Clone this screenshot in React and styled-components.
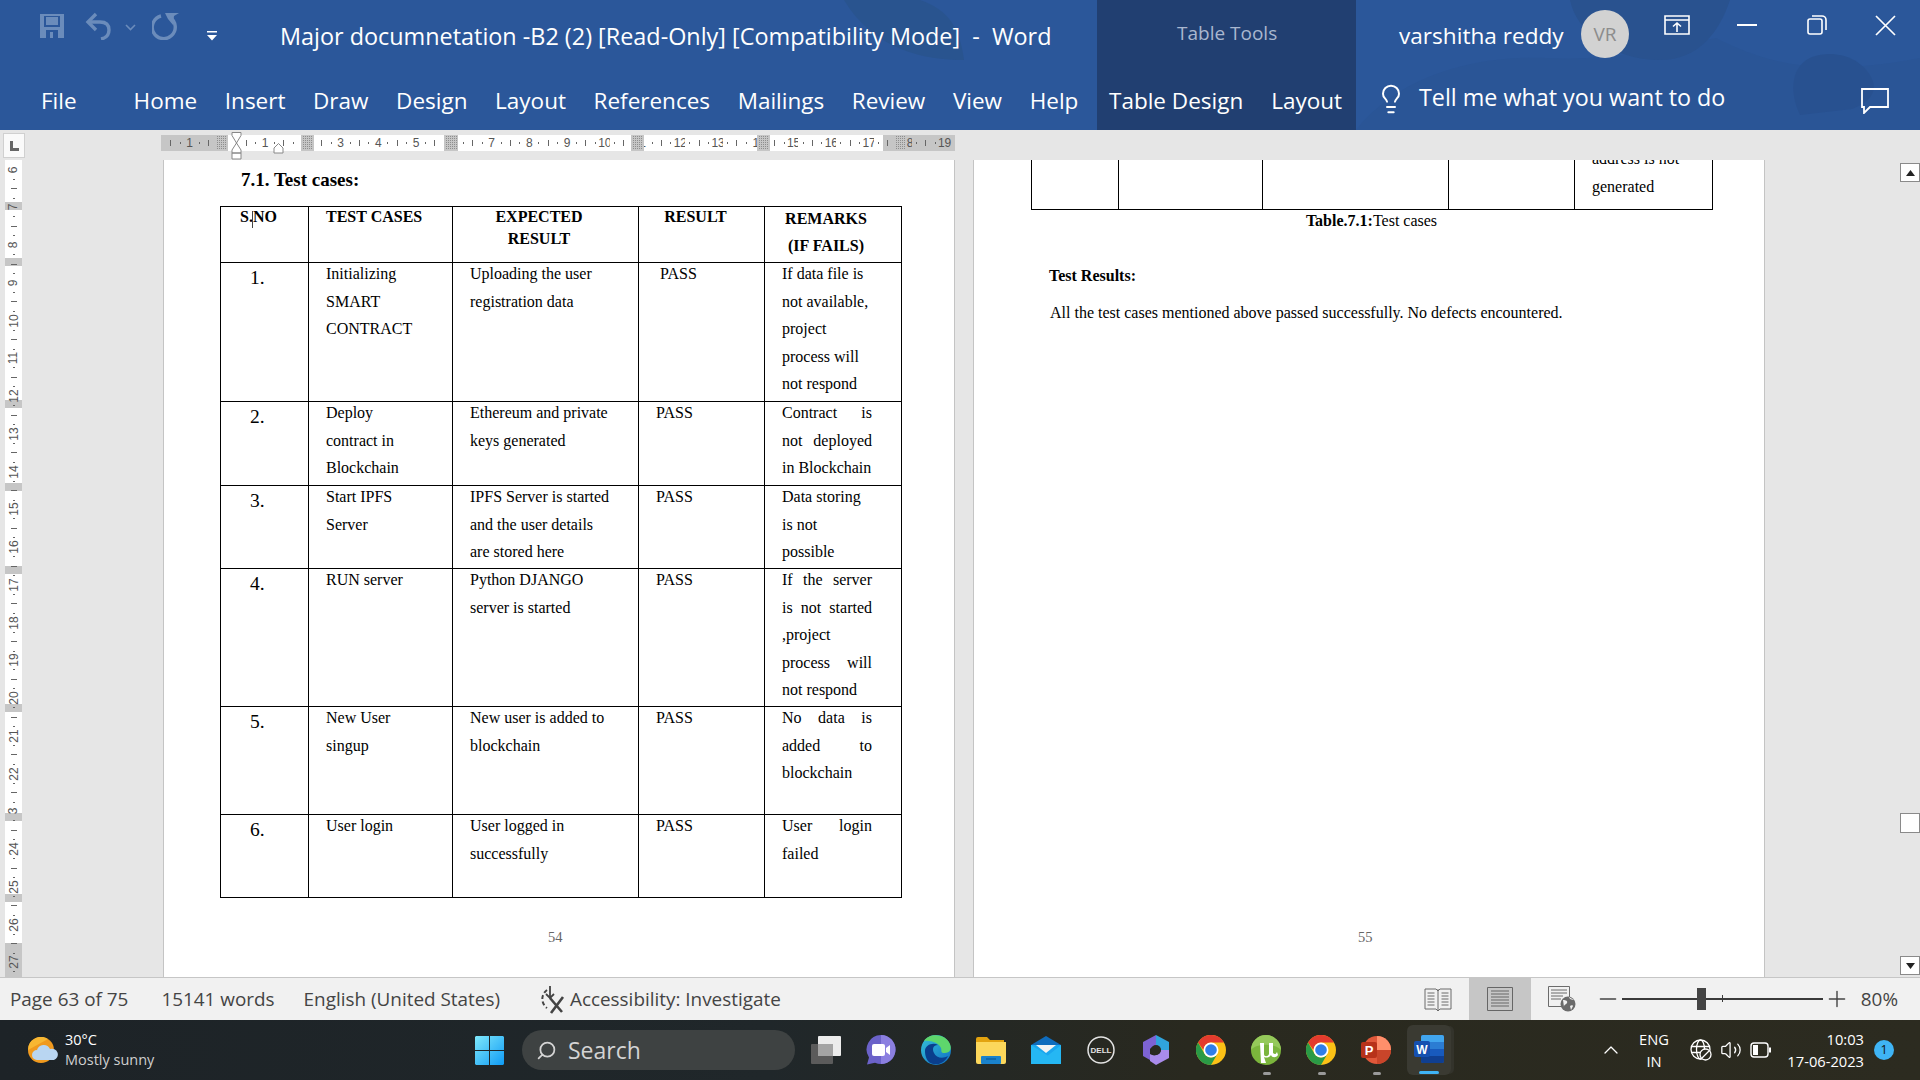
import React from 'react';
import styled, { createGlobalStyle } from 'styled-components';
import { Lightbulb, Search, Volume2, ChevronUp, Minus, Plus } from 'lucide-react';

const GlobalStyle = createGlobalStyle`
  html, body { margin: 0; padding: 0; }
  body { width: 1920px; height: 1080px; overflow: hidden; font-family: "Open Sans", sans-serif; }
  * { box-sizing: border-box; }
`;

const Screen = styled.div`
  width: 1920px;
  height: 1080px;
  display: flex;
  flex-direction: column;
  background: #e6e6e6;
`;

/* ---------- ribbon ---------- */

const Ribbon = styled.header`
  position: relative;
  height: 130px;
  display: flex;
  flex: none;
  background: #2b579a;
  color: #fff;
  overflow: hidden;
`;

const Art = styled.svg`
  position: absolute;
  left: 0;
  top: 0;
  pointer-events: none;
`;

const LeftPart = styled.div`
  position: relative;
  width: 1097px;
  display: flex;
  flex-direction: column;
`;

const ToolsPart = styled.div`
  position: relative;
  width: 259px;
  display: flex;
  flex-direction: column;
  background: rgba(28, 48, 88, 0.62);
`;

const RightPart = styled.div`
  position: relative;
  flex: 1;
  display: flex;
  flex-direction: column;
`;

const TitleRow = styled.div`
  height: 74px;
  display: flex;
  align-items: flex-start;
  padding: 12px 0 0 39px;
`;

const QuickIcon = styled.svg`
  flex: none;
  margin-right: ${(p) => p.$gap || 0}px;
  margin-top: ${(p) => p.$top || 0}px;
`;

const DocTitle = styled.div`
  font-size: 23.4px;
  line-height: 48px;
  white-space: pre;
  margin-left: 63px;
`;

const TabRow = styled.nav`
  height: 56px;
  display: flex;
  align-items: flex-start;
  padding-left: ${(p) => p.$left || 0}px;
`;

const Tab = styled.span`
  font-size: 22.5px;
  line-height: 54px;
  margin-right: ${(p) => p.$gap ?? 27.6}px;
  white-space: nowrap;
`;

const ToolsLabel = styled.div`
  height: 74px;
  padding: 15px 0 0 80px;
  font-size: 19px;
  line-height: 36px;
  color: #a9b7cf;
`;

const UserRow = styled.div`
  height: 74px;
  display: flex;
  align-items: flex-start;
  padding-left: 43px;
`;

const UserName = styled.div`
  width: 182px;
  font-size: 22.6px;
  line-height: 72px;
`;

const Avatar = styled.div`
  width: 48px;
  height: 48px;
  margin-top: 10px;
  border-radius: 50%;
  background: #d2d2d2;
  color: #8c8c8c;
  font-size: 19px;
  line-height: 48px;
  text-align: center;
`;

const WinButtons = styled.div`
  display: flex;
  align-items: center;
  height: 50px;
  margin-left: 35px;
`;

const WinIcon = styled.svg`
  flex: none;
  margin-left: ${(p) => p.$gap || 0}px;
`;

const TellRow = styled.div`
  display: flex;
  align-items: flex-start;
  height: 56px;
  padding-left: 19px;
`;

const TellText = styled.div`
  font-size: 23.3px;
  line-height: 46px;
  margin-left: 12px;
  width: 441px;
  white-space: nowrap;
`;

const BulbWrap = styled.div`
  margin-top: 9px;
  width: 32px;
  height: 32px;
`;

const CommentWrap = styled.div`
  margin-top: 14px;
`;

/* ---------- horizontal ruler ---------- */

const RulerBar = styled.div`
  height: 30px;
  flex: none;
  display: flex;
  background: #e6e6e6;
`;

const TabStopBox = styled.div`
  width: 22px;
  height: 25px;
  margin: 3px 0 0 3px;
  background: #fafafa;
  border: 1px solid #d0d0d0;
  display: flex;
  align-items: center;
  justify-content: center;
`;

const RulerTrack = styled.div`
  position: relative;
  display: flex;
  width: 794px;
  height: 16px;
  margin: 5px 0 0 136px;
  padding-left: 5px;
  background: #c6c6c6;
`;

const Cell = styled.div`
  flex: none;
  width: 9.45px;
  height: 16px;
  background: ${(p) => (p.$shade ? '#c6c6c6' : '#fff')};
  color: #555;
  display: flex;
  align-items: center;
  justify-content: center;
  font-family: "Liberation Sans", sans-serif;
  font-size: 12px;
  white-space: nowrap;
`;

const Dot = styled.i`
  display: block;
  width: 1px;
  height: ${(p) => (p.$long ? 6 : 2)}px;
  background: #666;
`;

const MarginMark = styled.div`
  position: absolute;
  top: 0;
  height: 16px;
  background: #c6c6c6;
  padding: 1px;
`;

const Hatch = styled.div`
  width: 100%;
  height: 100%;
  background-color: #8e8e8e;
  background-image: repeating-linear-gradient(0deg, #c6c6c6 0 1px, transparent 1px 2px),
    repeating-linear-gradient(90deg, #c6c6c6 0 1px, transparent 1px 2px);
`;

const IndentMark = styled.svg`
  position: absolute;
  top: ${(p) => p.$top}px;
`;

/* ---------- document ---------- */

const DocArea = styled.div`
  flex: 1;
  min-height: 0;
  display: flex;
`;

const SideRuler = styled.div`
  position: relative;
  width: 17px;
  margin-left: 5px;
  padding-top: 5px;
  background: #fff;
  flex: none;
  overflow: hidden;
`;

const SideCell = styled.div`
  position: relative;
  z-index: 1;
  height: 9.45px;
  display: flex;
  align-items: center;
  justify-content: center;
  color: #555;
  font-family: "Liberation Sans", sans-serif;
  font-size: 12px;
  white-space: nowrap;
`;

const SideNum = styled.span`
  display: block;
  line-height: 12px;
  transform: rotate(-90deg);
`;

const SideDot = styled.i`
  display: block;
  height: 1px;
  width: ${(p) => (p.$long ? 6 : 2)}px;
  background: #666;
`;

const SideMark = styled.div`
  position: absolute;
  left: 0;
  width: 17px;
  background: #c6c6c6;
`;

const Pages = styled.div`
  display: flex;
  gap: 18px;
  margin-left: 141px;
`;

const Page = styled.section`
  position: relative;
  width: 792px;
  height: 817px;
  background: #fff;
  border-left: 1px solid #c4c4c4;
  border-right: 1px solid #c4c4c4;
  overflow: hidden;
  color: #000;
  font-family: "Liberation Serif", serif;
  font-size: 16px;
`;

const SectionHead = styled.h2`
  margin: 7px 0 0 77px;
  font-size: 19px;
  line-height: 26px;
  font-weight: 700;
`;

const Sheet = styled.table`
  table-layout: fixed;
  border-collapse: collapse;
  width: ${(p) => p.$width}px;
  margin: ${(p) => p.$margin};
  tbody td, thead th { border: 1px solid #000; }
  ${(p) => p.$open && 'tbody tr:first-child td { border-top: none; }'}
`;

const Row = styled.tr`
  height: ${(p) => p.$h}px;
`;

const Td = styled.td`
  position: relative;
  padding: 0 ${(p) => p.$right ?? 0}px 0 ${(p) => p.$left ?? 17}px;
  vertical-align: top;
  font-size: 16px;
  line-height: 27.5px;
`;

const Th = styled.th`
  position: relative;
  padding: 0 ${(p) => p.$right ?? 0}px 0 ${(p) => p.$left ?? 0}px;
  vertical-align: top;
  font-size: 16px;
  font-weight: 700;
  line-height: ${(p) => p.$line || 27}px;
  text-align: ${(p) => p.$align || 'center'};
`;

const Lines = styled.div`
  margin-top: ${(p) => p.$shift ?? -3}px;
`;

const Line = styled.div`
  white-space: nowrap;
  ${(p) => p.$justify && 'white-space: normal; text-align: justify; text-align-last: justify;'}
`;

const Num = styled.div`
  font-size: 19.5px;
  line-height: 29px;
`;

const Caret = styled.span`
  position: absolute;
  left: 31px;
  top: 4px;
  width: 1px;
  height: 17px;
  background: #444;
`;

const PageNo = styled.div`
  position: absolute;
  bottom: 31px;
  left: ${(p) => p.$left}px;
  font-size: 14.5px;
  color: #666;
`;

const Caption = styled.div`
  width: 681px;
  margin-left: 57px;
  text-align: center;
  font-size: 16px;
  line-height: 22px;
  b { font-weight: 700; }
`;

const Para = styled.p`
  margin: ${(p) => p.$top}px 0 0 ${(p) => p.$left || 75}px;
  font-size: 16px;
  line-height: 24px;
  font-weight: ${(p) => (p.$bold ? 700 : 400)};
  white-space: nowrap;
`;

/* ---------- scrollbar ---------- */

const ScrollBar = styled.div`
  width: 20px;
  margin-left: auto;
  display: flex;
  flex-direction: column;
  align-items: stretch;
  padding: 3px 0 2px;
  height: 817px;
`;

const ScrollButton = styled.div`
  height: 19px;
  background: #fff;
  border: 1px solid #8a8a8a;
  color: #222;
  display: flex;
  align-items: center;
  justify-content: center;
`;

const ScrollThumb = styled.div`
  height: 20px;
  margin-top: 631px;
  margin-bottom: auto;
  background: #fff;
  border: 1px solid #8a8a8a;
`;

/* ---------- status bar ---------- */

const StatusBar = styled.footer`
  height: 43px;
  flex: none;
  display: flex;
  align-items: center;
  background: #f1f1f1;
  border-top: 1px solid #c6c6c6;
  color: #444;
  font-size: 18.9px;
  padding: 0 22px 0 10px;
`;

const StatusText = styled.span`
  margin-right: ${(p) => p.$gap}px;
  margin-left: ${(p) => p.$lead || 0}px;
  white-space: nowrap;
`;

const ViewSpacer = styled.div`
  flex: 1;
`;

const ViewButton = styled.div`
  width: ${(p) => p.$w}px;
  height: 42px;
  display: flex;
  align-items: center;
  justify-content: center;
  background: ${(p) => (p.$active ? '#c6c6c6' : 'transparent')};
`;

const Zoomer = styled.div`
  display: flex;
  align-items: center;
  margin-left: 2px;
  color: #444;
`;

const SliderLine = styled.div`
  position: relative;
  width: 201px;
  height: 2px;
  margin: 0 1px;
  background: #3a3a3a;
`;

const SliderThumb = styled.div`
  position: absolute;
  left: 75px;
  top: -10px;
  width: 9px;
  height: 22px;
  background: #444;
`;

const SliderTick = styled.div`
  position: absolute;
  left: 100px;
  top: -3px;
  width: 1px;
  height: 7px;
  background: #3a3a3a;
`;

const Percent = styled.div`
  margin-left: 11px;
  white-space: nowrap;
`;

/* ---------- taskbar ---------- */

const Taskbar = styled.div`
  height: 60px;
  flex: none;
  display: flex;
  align-items: center;
  background: linear-gradient(90deg, #1d2327 0%, #20272a 40%, #29291f 62%, #2c2b20 100%);
  color: #fff;
`;

const Weather = styled.div`
  width: 475px;
  display: flex;
  align-items: center;
  padding-left: 28px;
`;

const WeatherText = styled.div`
  margin-left: 7px;
  font-size: 14.5px;
  line-height: 20px;
  span { display: block; color: #cfcfcf; }
`;

const SearchPill = styled.div`
  width: 273px;
  height: 40px;
  margin: 0 3.5px 0 18px;
  border-radius: 20px;
  background: #3e4242;
  display: flex;
  align-items: center;
  padding-left: 14px;
  color: #d4d4d4;
  font-size: 23px;
  gap: 11px;
`;

const Slot = styled.div`
  position: relative;
  width: 55px;
  height: 60px;
  flex: none;
  display: flex;
  align-items: center;
  justify-content: center;
`;

const RunDot = styled.span`
  position: absolute;
  left: 24px;
  bottom: 5px;
  width: 8px;
  height: 3px;
  border-radius: 2px;
  background: #9a9a9a;
`;

const WordSlot = styled.div`
  position: relative;
  width: 44px;
  height: 50px;
  margin-left: 3px;
  flex: none;
  display: flex;
  align-items: center;
  justify-content: center;
  padding-bottom: 2px;
  border-radius: 6px;
  background: #3a3a32;
  box-shadow: 4px 0 0 -1px #33332b;
`;

const WordLine = styled.span`
  position: absolute;
  left: 12px;
  bottom: 1px;
  width: 20px;
  height: 3px;
  border-radius: 2px;
  background: #3fb4f5;
`;

const Tray = styled.div`
  margin-left: 148.5px;
  display: flex;
  align-items: center;
`;

const LangBlock = styled.div`
  width: 40px;
  margin: 0 16px 0 11px;
  text-align: center;
  font-size: 14.7px;
  line-height: 22px;
`;

const TrayIcons = styled.div`
  display: flex;
  align-items: center;
  gap: 8px;
`;

const Clock = styled.div`
  width: 93px;
  text-align: right;
  font-size: 14.7px;
  line-height: 22px;
`;

const Badge = styled.div`
  width: 20px;
  height: 20px;
  margin-left: 10px;
  border-radius: 50%;
  background: #3fb4f5;
  color: #111;
  font-size: 12.5px;
  line-height: 20px;
  text-align: center;
`;

/* ---------- data ---------- */

const rows = [
  { no: '1.', h: 139, cases: ['Initializing', 'SMART', 'CONTRACT'], expected: ['Uploading the user', 'registration data'], pass: 21,
    remarks: [['If data file is'], ['not available,'], ['project'], ['process will'], ['not respond']] },
  { no: '2.', h: 84, cases: ['Deploy', 'contract in', 'Blockchain'], expected: ['Ethereum and private', 'keys generated'], pass: 17,
    remarks: [['Contract is', 1], ['not deployed', 1], ['in Blockchain']] },
  { no: '3.', h: 83, cases: ['Start IPFS', 'Server'], expected: ['IPFS Server is started', 'and the user details', 'are stored here'], pass: 17,
    remarks: [['Data storing'], ['is not'], ['possible']] },
  { no: '4.', h: 138, cases: ['RUN server'], expected: ['Python DJANGO', 'server is started'], pass: 17,
    remarks: [['If the server', 1], ['is not started', 1], [',project'], ['process will', 1], ['not respond']] },
  { no: '5.', h: 108, cases: ['New User', 'singup'], expected: ['New user is added to', 'blockchain'], pass: 17,
    remarks: [['No data is', 1], ['added to', 1], ['blockchain']] },
  { no: '6.', h: 83, cases: ['User login'], expected: ['User logged in', 'successfully'], pass: 17,
    remarks: [['User login', 1], ['failed']] },
];

const rulerLabels = { 1: '1', 3: '3', 4: '4', 5: '5', 7: '7', 8: '8', 9: '9', 10: '10', 11: '1', 12: '12', 13: '13', 14: '1', 15: '15', 16: '16', 17: '17', 18: '18', 19: '19' };
const rulerMarks = [[54, 13], [140, 13], [283, 14], [470, 13], [596, 13], [733, 13]];
const sideMarks = [[42, 8], [98, 8], [240, 8], [323, 8], [406, 8], [544, 8], [653, 8], [734, 8], [783, 34]];
const tabs = ['Home', 'Insert', 'Draw', 'Design', 'Layout', 'References', 'Mailings', 'Review', 'View', 'Help'];
const cellIndexes = Array.from({ length: 83 }, (_, i) => i - 6);
const sideIndexes = Array.from({ length: 86 }, (_, i) => i);
const sideLabel = (n) => (n === 23 ? '3' : n);

/* ---------- small drawings ---------- */

const muted = '#6b8cbb';

const SaveIcon = () => (
  <QuickIcon width="26" height="26" viewBox="0 0 26 26" $gap={20} $top={1}>
    <path d="M1 1h24v24H1z" fill={muted} />
    <path d="M5 3h16v11H5z" fill="#2b579a" />
    <path d="M7 4h12v8H7z" fill={muted} />
    <path d="M7 17h12v8H7z" fill="#2b579a" />
    <path d="M11 19h3v6h-3z" fill={muted} />
  </QuickIcon>
);

const UndoIcon = () => (
  <QuickIcon width="27" height="28" viewBox="0 0 27 28" fill="none" stroke={muted} strokeWidth="3.4" $gap={13}>
    <path d="M11 2 3 10l8 8" />
    <path d="M3 10h12c6 0 9 3 9 8s-3 8-8 9" />
  </QuickIcon>
);

const ChevronSmall = () => (
  <QuickIcon width="11" height="7" viewBox="0 0 11 7" fill="none" stroke={muted} strokeWidth="1.6" $gap={16} $top={12}>
    <path d="m1 1 4.500 4.500L10 1" />
  </QuickIcon>
);

const RedoIcon = () => (
  <QuickIcon width="28" height="28" viewBox="0 0 28 28" fill="none" $gap={27}>
    <path d="M18 5.500A11.500 11.500 0 1 1 9 4" stroke={muted} strokeWidth="3.4" />
    <path d="M13 1h14l-5 3-1 9-5-6z" fill={muted} />
  </QuickIcon>
);

const CustomizeIcon = () => (
  <QuickIcon width="10" height="10" viewBox="0 0 10 10" $top={19}>
    <path d="M0 0h10v1.500H0zM0 4h10L5 9.500z" fill="#fff" />
  </QuickIcon>
);

const RibbonDisplay = () => (
  <WinIcon width="26" height="20" viewBox="0 0 26 20" fill="none" stroke="#fff" strokeWidth="1.6">
    <path d="M1 1h24v18H1zM1 5h24M13 17V8M9 11.500 13 8l4 3.500" />
  </WinIcon>
);

const MinimizeIcon = () => (
  <WinIcon $gap={47} width="20" height="2" viewBox="0 0 20 2"><path d="M0 0h20v2H0z" fill="#fff" /></WinIcon>
);

const RestoreIcon = () => (
  <WinIcon $gap={50} width="20" height="20" viewBox="0 0 20 20" fill="none" stroke="#fff" strokeWidth="1.6">
    <rect x="1" y="4" width="14" height="15" rx="2" />
    <path d="M5 1h10a4 4 0 0 1 4 4v10" />
  </WinIcon>
);

const CloseIcon = () => (
  <WinIcon $gap={48} width="21" height="21" viewBox="0 0 21 21" fill="none" stroke="#fff" strokeWidth="1.7">
    <path d="m1 1 19 19M20 1 1 20" />
  </WinIcon>
);

const Comment = () => (
  <svg width="30" height="26" viewBox="0 0 30 26" fill="none" stroke="#fff" strokeWidth="1.8">
    <path d="M2 1h26v18H10l-6 6v-6H2z" />
  </svg>
);

const TabStop = () => (
  <svg width="9" height="10" viewBox="0 0 9 10"><path d="M0 0h3v7h6v3H0z" fill="#666" /></svg>
);

const ReadIcon = () => (
  <svg width="28" height="25" viewBox="0 0 28 25" fill="none" stroke="#6b6b6b" strokeWidth="1">
    <path d="M1 2h11l2 2 2-2h11v20H16l-2 2-2-2H1zM14 2v22" />
    <path d="M3.500 6h7M3.500 9h7M3.500 12h7M3.500 15h7M3.500 18h7M17.500 6h7M17.500 9h7M17.500 12h7M17.500 15h7M17.500 18h7" />
  </svg>
);

const PrintIcon = () => (
  <svg width="26" height="24" viewBox="0 0 26 24" fill="none" stroke="#666" strokeWidth="1">
    <path d="M.500.500h25v23H.500zM4 4h18M4 7h18M4 10h18M4 13h18M4 16h18M4 19h18" />
  </svg>
);

const WebIcon = () => (
  <svg width="28" height="26" viewBox="0 0 28 26" fill="none">
    <path d="M.500.500h21v20H.500zM3 4h16M3 7h16M3 10h12M3 13h10" stroke="#6b6b6b" />
    <circle cx="20" cy="18" r="7.500" fill="#6b6b6b" />
    <path d="M15 14c3 0 5 1 4 3s-3 1-3 4M21 11c0 2 3 3 5 3M22 20c1-1 3-1 3 0l-2 4z" fill="#f1f1f1" />
  </svg>
);

const AccessIcon = () => (
  <svg width="30" height="30" viewBox="0 0 30 30" fill="none" stroke="#444" strokeWidth="2">
    <path d="M9 6A11 11 0 0 0 9 24" strokeDasharray="4 2.500" />
    <path d="M12 2v12M8 10l4 4 4-4" strokeWidth="1.8" />
    <path d="m12 14 12 14M25 13 13 29" strokeWidth="2.6" />
  </svg>
);

const WeatherIcon = () => (
  <svg width="30" height="26" viewBox="0 0 30 26">
    <ellipse cx="13" cy="13" rx="13" ry="13" fill="#f09a1f" />
    <path d="M0 13a13 13 0 0 1 20-11z" fill="#f7b733" />
    <path d="M9 23a5 5 0 0 1 0-10 7 7 0 0 1 13-1 5.500 5.500 0 0 1 4 11z" fill="#b9d6f2" />
  </svg>
);

const WinLogo = () => (
  <svg width="29" height="29" viewBox="0 0 29 29">
    <defs>
      <linearGradient id="winFill" x1="0" y1="0" x2="1" y2="1">
        <stop offset="0" stopColor="#7fe8fb" />
        <stop offset="1" stopColor="#0f9bf5" />
      </linearGradient>
    </defs>
    <path d="M1 0h13v14H0V1zM15 0h13l1 1v13H15zM0 15h14v14H1l-1-1zM15 15h14v13l-1 1H15z" fill="url(#winFill)" />
  </svg>
);

const TaskView = () => (
  <svg width="30" height="28" viewBox="0 0 30 28">
    <rect x="0" y="8" width="22" height="20" rx="1" fill="#5b5b5b" />
    <rect x="7" y="0" width="23" height="20" rx="1" fill="#ececec" />
    <rect x="7" y="8" width="15" height="12" fill="#a4a4a4" />
  </svg>
);

const ChatIcon = () => (
  <svg width="30" height="30" viewBox="0 0 30 30">
    <path d="M15 0a14.500 14.500 0 1 1-6 27.700L1 29.500l2-7A14.500 14.500 0 0 1 15 0z" fill="#6b62c9" />
    <path d="M15 0a14.500 14.500 0 0 1 0 29z" fill="#8b7fe0" />
    <rect x="6" y="9" width="13" height="12" rx="2" fill="#fff" />
    <path d="m20 13 4-3v10l-4-3z" fill="#fff" />
  </svg>
);

const EdgeIcon = () => (
  <svg width="30" height="30" viewBox="0 0 30 30">
    <defs>
      <linearGradient id="edgeA" x1="0" y1="0" x2="1" y2="1">
        <stop offset="0" stopColor="#36c2d8" />
        <stop offset="1" stopColor="#0f6fc4" />
      </linearGradient>
    </defs>
    <circle cx="15" cy="15" r="15" fill="url(#edgeA)" />
    <path d="M3 6C8-2 24-2 29 9c2 5 0 9-5 9-5 0-3-2-4-5-2-5-10-8-17-7z" fill="#5ed66c" />
    <path d="M4 16c0-6 8-9 13-6-5 0-6 4-4 8 2 5 9 6 14 3-4 8-11 9-15 8-6-1-8-8-8-13z" fill="#0a3e8c" />
  </svg>
);

const FolderIcon = () => (
  <svg width="30" height="27" viewBox="0 0 30 27">
    <path d="M0 2a2 2 0 0 1 2-2h9l3 3h14v6H0z" fill="#e3a30f" />
    <path d="M0 5h30v20a2 2 0 0 1-2 2H2a2 2 0 0 1-2-2z" fill="#fcd75b" />
    <rect x="5" y="19" width="20" height="8" rx="1" fill="#1a82cc" />
    <path d="M10 22h10" stroke="#0b5b9c" strokeWidth="1.3" />
  </svg>
);

const MailIcon = () => (
  <svg width="30" height="28" viewBox="0 0 30 28">
    <path d="m0 9 15-9 15 9v2H0z" fill="#0f6cbd" />
    <path d="M0 9h30v19H0z" fill="#1aa6ee" />
    <path d="M5 9h20l-10 8z" fill="#f3f3f3" />
    <path d="M0 9v19h30zM0 9l15 12L30 9v19z" fill="#2dc3f6" opacity="0.6" />
  </svg>
);

const DellIcon = () => (
  <svg width="28" height="28" viewBox="0 0 28 28">
    <circle cx="14" cy="14" r="13" fill="none" stroke="#e3e3e3" strokeWidth="1.5" />
    <text x="14" y="17" textAnchor="middle" fontSize="8" fontWeight="700" fill="#e3e3e3" fontFamily="Liberation Sans, sans-serif">DELL</text>
  </svg>
);

const OfficeIcon = () => (
  <svg width="28" height="30" viewBox="0 0 28 30">
    <path d="M14 0 27 7v8h-8a6 6 0 0 0-5-4z" fill="#30a4dd" />
    <path d="M14 0 1 7v14l7 4V14a7 7 0 0 1 6-3z" fill="#7d63d4" />
    <path d="M8 19a7 7 0 0 0 11-4h8v8l-13 7-6-4z" fill="#a98bea" />
    <circle cx="14" cy="15" r="5" fill="#2a2a20" />
  </svg>
);

const ChromeIcon = () => (
  <svg width="30" height="30" viewBox="0 0 30 30">
    <circle cx="15" cy="15" r="15" fill="#fbc116" />
    <path d="M2 7.500A15 15 0 0 1 28 7.500H15a7.500 7.500 0 0 0-7.500 7.500z" fill="#e33b2e" />
    <path d="M2 7.500A15 15 0 0 0 15 30l6.500-11.250A7.500 7.500 0 0 1 8.500 18.750z" fill="#2a9a46" />
    <circle cx="15" cy="15" r="7.500" fill="#fff" />
    <circle cx="15" cy="15" r="5.800" fill="#2f7ee8" />
  </svg>
);

const TorrentIcon = () => (
  <svg width="30" height="30" viewBox="0 0 30 30">
    <circle cx="15" cy="15" r="15" fill="#7bb53c" />
    <path d="M0 15a15 15 0 0 1 30 0c-5-7-25-7-30 0z" fill="#95c95a" />
    <path d="M9 8h4v11c0 3 4 3 5 0V8h4v10c2 2 3 1 4-1l1 3c-2 3-6 3-7 0-2 3-5 3-7 2l2 6h-5z" fill="#fff" />
  </svg>
);

const PowerPointIcon = () => (
  <svg width="30" height="28" viewBox="0 0 30 28">
    <circle cx="16" cy="14" r="14" fill="#e0583a" />
    <path d="M16 0a14 14 0 0 1 14 14H16z" fill="#ff8f6b" />
    <path d="M16 14h14a14 14 0 0 1-14 14z" fill="#c9452a" />
    <rect x="0" y="6" width="16" height="16" rx="2" fill="#b7321a" />
    <text x="8" y="19" textAnchor="middle" fontSize="13" fontWeight="700" fill="#fff" fontFamily="Liberation Sans, sans-serif">P</text>
  </svg>
);

const WordIcon = () => (
  <svg width="30" height="28" viewBox="0 0 30 28">
    <rect x="7" y="0" width="23" height="28" rx="2" fill="#185abd" />
    <path d="M9 0h19a2 2 0 0 1 2 2v5H7V2a2 2 0 0 1 2-2z" fill="#41a5ee" />
    <path d="M7 7h23v7H7z" fill="#2b7cd3" />
    <path d="M7 21h23v5a2 2 0 0 1-2 2H9a2 2 0 0 1-2-2z" fill="#103f91" />
    <rect x="0" y="6" width="16" height="16" rx="2" fill="#1650b0" />
    <text x="8" y="19" textAnchor="middle" fontSize="12" fontWeight="700" fill="#fff" fontFamily="Liberation Sans, sans-serif">W</text>
  </svg>
);

const GlobeBlocked = () => (
  <svg width="22" height="22" viewBox="0 0 22 22" fill="none" stroke="#fff" strokeWidth="1.3">
    <circle cx="10.500" cy="10.500" r="9.500" />
    <ellipse cx="10.500" cy="10.500" rx="4" ry="9.500" />
    <path d="M1.500 7.500h18M1.500 13.500h18" />
    <circle cx="15.500" cy="15.500" r="5.500" fill="#2b2a20" />
    <path d="m12 19 7-7" />
  </svg>
);

const BatteryIcon = () => (
  <svg width="21" height="16" viewBox="0 0 21 16" fill="none">
    <rect x="1" y="1" width="17" height="14" rx="3" stroke="#fff" strokeWidth="1.4" />
    <rect x="3" y="3" width="5" height="10" fill="#fff" />
    <rect x="19" y="5.500" width="2" height="5" fill="#fff" />
  </svg>
);

const Backdrop = () => (
  <Art width="1920" height="130" viewBox="0 0 1920 130">
    <path d="M1356 130c40-50 110-75 190-72 70 3 120-10 170-20 50 25 100 40 204 20v72z" fill="#2a5596" />
    <path d="M1570 0c6 30 40 60 90 60 40 0 60-30 70-60z" fill="#29528f" />
    <path d="M1800 115c-12-25-8-50 12-58 22-8 50 0 60 22 6 14-4 24-20 30z" fill="#285190" />
    <path d="M920 0c30 10 40 30 44 60-40 0-90-10-120-60z" fill="#29548f" />
  </Art>
);

const App = () => (
  <Screen>
    <GlobalStyle />
    <Ribbon>
      <Backdrop />
      <LeftPart>
        <TitleRow>
          <SaveIcon />
          <UndoIcon />
          <ChevronSmall />
          <RedoIcon />
          <CustomizeIcon />
          <DocTitle>Major documnetation -B2 (2) [Read-Only] [Compatibility Mode]  -  Word</DocTitle>
        </TitleRow>
        <TabRow $left={41}>
          <Tab $gap={57}>File</Tab>
          {tabs.map((name) => <Tab key={name}>{name}</Tab>)}
        </TabRow>
      </LeftPart>
      <ToolsPart>
        <ToolsLabel>Table Tools</ToolsLabel>
        <TabRow $left={12}>
          <Tab $gap={28}>Table Design</Tab>
          <Tab $gap={0}>Layout</Tab>
        </TabRow>
      </ToolsPart>
      <RightPart>
        <UserRow>
          <UserName>varshitha reddy</UserName>
          <Avatar>VR</Avatar>
          <WinButtons>
            <RibbonDisplay />
            <MinimizeIcon />
            <RestoreIcon />
            <CloseIcon />
          </WinButtons>
        </UserRow>
        <TellRow>
          <BulbWrap><Lightbulb size={32} strokeWidth={1.5} color="#fff" /></BulbWrap>
          <TellText>Tell me what you want to do</TellText>
          <CommentWrap><Comment /></CommentWrap>
        </TellRow>
      </RightPart>
    </Ribbon>

    <RulerBar>
      <TabStopBox><TabStop /></TabStopBox>
      <RulerTrack>
        {cellIndexes.map((i) => {
          const n = Math.abs(i) / 4;
          const shade = i < 0 || i >= 70;
          return (
            <Cell key={i} $shade={shade}>
              {i % 4 === 0 ? (i === -4 ? '1' : rulerLabels[n] || '') : <Dot $long={Math.abs(i % 4) === 2} />}
            </Cell>
          );
        })}
        {rulerMarks.map(([left, width]) => (
          <MarginMark key={left} style={{ left, width }}><Hatch /></MarginMark>
        ))}
        <IndentMark $top={-3} style={{ left: 70 }} width="11" height="28" viewBox="0 0 11 28" fill="#fff" stroke="#888">
          <path d="M1 .5h9v3L5.500 11 1 3.500zM5.500 11 10 18v3H1v-3zM1 21h9v6H1z" />
        </IndentMark>
        <IndentMark $top={8} style={{ left: 112 }} width="11" height="11" viewBox="0 0 11 11" fill="#fff" stroke="#888">
          <path d="M5.500.5 10 5v5H1V5z" />
        </IndentMark>
      </RulerTrack>
    </RulerBar>

    <DocArea>
      <SideRuler>
        {sideMarks.map(([top, height]) => <SideMark key={top} style={{ top, height }} />)}
        {sideIndexes.map((i) => (
          <SideCell key={i}>
            {i % 4 === 0 ? <SideNum>{sideLabel(6 + i / 4)}</SideNum> : <SideDot $long={i % 4 === 2} />}
          </SideCell>
        ))}
      </SideRuler>
      <Pages>
        <Page>
          <SectionHead>7.1. Test cases:</SectionHead>
          <Sheet $width={681} $margin="13px 0 0 56px">
            <colgroup>
              <col width="88" /><col width="144" /><col width="186" /><col width="126" /><col width="137" />
            </colgroup>
            <thead>
              <Row $h={56}>
                <Th $align="left" $left={19}><Lines $shift={-4}>S.NO</Lines><Caret /></Th>
                <Th $align="left" $left={17}><Lines $shift={-4}>TEST CASES</Lines></Th>
                <Th $line={22} $right={13}><Lines $shift={-1}>EXPECTED<br />RESULT</Lines></Th>
                <Th $right={12}><Lines $shift={-4}>RESULT</Lines></Th>
                <Th $right={14}><Lines $shift={-2}>REMARKS<br />(IF FAILS)</Lines></Th>
              </Row>
            </thead>
            <tbody>
              {rows.map((row) => (
                <Row key={row.no} $h={row.h}>
                  <Td $left={29}><Num>{row.no}</Num></Td>
                  <Td><Lines>{row.cases.map((t) => <Line key={t}>{t}</Line>)}</Lines></Td>
                  <Td><Lines>{row.expected.map((t) => <Line key={t}>{t}</Line>)}</Lines></Td>
                  <Td $left={row.pass}><Lines>PASS</Lines></Td>
                  <Td $right={29}>
                    <Lines>{row.remarks.map(([t, justify]) => <Line key={t} $justify={justify}>{t}</Line>)}</Lines>
                  </Td>
                </Row>
              ))}
            </tbody>
          </Sheet>
          <PageNo $left={384}>54</PageNo>
        </Page>
        <Page>
          <Sheet $open $width={681} $margin="0 0 0 57px">
            <colgroup>
              <col width="87" /><col width="144" /><col width="186" /><col width="126" /><col width="138" />
            </colgroup>
            <tbody>
              <Row $h={49}>
                <Td /><Td /><Td /><Td />
                <Td><Lines $shift={-15}>address is not<br />generated</Lines></Td>
              </Row>
            </tbody>
          </Sheet>
          <Caption><b>Table.7.1:</b>Test cases</Caption>
          <Para $bold $top={32}>Test Results:</Para>
          <Para $left={76} $top={13}>All the test cases mentioned above passed successfully. No defects encountered.</Para>
          <PageNo $left={384}>55</PageNo>
        </Page>
      </Pages>
      <ScrollBar>
        <ScrollButton><svg width="9" height="6" viewBox="0 0 9 6"><path d="M4.500 0 9 6H0z" fill="#222" /></svg></ScrollButton>
        <ScrollThumb />
        <ScrollButton><svg width="9" height="6" viewBox="0 0 9 6"><path d="M0 0h9L4.500 6z" fill="#222" /></svg></ScrollButton>
      </ScrollBar>
    </DocArea>

    <StatusBar>
      <StatusText $gap={33}>Page 63 of 75</StatusText>
      <StatusText $gap={29}>15141 words</StatusText>
      <StatusText $gap={38}>English (United States)</StatusText>
      <AccessIcon />
      <StatusText $lead={2} $gap={0}>Accessibility: Investigate</StatusText>
      <ViewSpacer />
      <ViewButton $w={62}><ReadIcon /></ViewButton>
      <ViewButton $w={62} $active><PrintIcon /></ViewButton>
      <ViewButton $w={62}><WebIcon /></ViewButton>
      <Zoomer>
        <Minus size={26} strokeWidth={1.3} />
        <SliderLine><SliderThumb /><SliderTick /></SliderLine>
        <Plus size={26} strokeWidth={1.3} />
        <Percent>80%</Percent>
      </Zoomer>
    </StatusBar>

    <Taskbar>
      <Weather>
        <WeatherIcon />
        <WeatherText>30°C<span>Mostly sunny</span></WeatherText>
      </Weather>
      <WinLogo />
      <SearchPill><Search size={21} strokeWidth={2} style={{ transform: 'scaleX(-1)' }} />Search</SearchPill>
      <Slot><TaskView /></Slot>
      <Slot><ChatIcon /></Slot>
      <Slot><EdgeIcon /></Slot>
      <Slot><FolderIcon /></Slot>
      <Slot><MailIcon /></Slot>
      <Slot><DellIcon /></Slot>
      <Slot><OfficeIcon /></Slot>
      <Slot><ChromeIcon /></Slot>
      <Slot><TorrentIcon /><RunDot /></Slot>
      <Slot><ChromeIcon /><RunDot /></Slot>
      <Slot><PowerPointIcon /><RunDot /></Slot>
      <WordSlot><WordIcon /><WordLine /></WordSlot>
      <Tray>
        <ChevronUp size={24} strokeWidth={1.3} />
        <LangBlock>ENG<br />IN</LangBlock>
        <TrayIcons>
          <GlobeBlocked />
          <Volume2 size={22} strokeWidth={1.4} />
          <BatteryIcon />
        </TrayIcons>
        <Clock>10:03<br />17-06-2023</Clock>
        <Badge>1</Badge>
      </Tray>
    </Taskbar>
  </Screen>
);

export default App;
